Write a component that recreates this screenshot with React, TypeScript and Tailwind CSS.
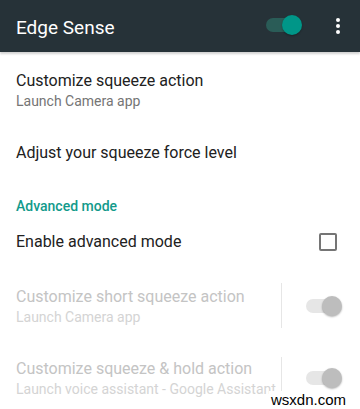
import React from 'react';

function Toggle({ on, disabled }: { on: boolean; disabled?: boolean }) {
  // Material-style switch: track behind a round knob
  const track = disabled ? 'bg-[#e6e6e6]' : on ? 'bg-[#2a5c57]' : 'bg-[#9e9e9e]';
  const knob = disabled ? 'bg-[#bdbdbd]' : on ? 'bg-[#009688]' : 'bg-[#f1f1f1]';
  return (
    <div className="relative w-[34px] h-[20px] flex items-center">
      <div className={`w-[34px] h-[14px] rounded-full ${track}`} />
      <div
        className={`absolute top-0 ${on ? 'right-[-2px]' : 'left-[-2px]'} w-[20px] h-[20px] rounded-full ${knob} shadow-[0_1px_2px_rgba(0,0,0,0.3)]`}
      />
    </div>
  );
}

function Kebab() {
  return (
    <svg width="6" height="18" viewBox="0 0 6 18" fill="#ffffff">
      <circle cx="3" cy="3" r="2" />
      <circle cx="3" cy="9" r="2" />
      <circle cx="3" cy="15" r="2" />
    </svg>
  );
}

export default function App() {
  return (
    <div className="relative w-[360px] h-[409px] bg-white overflow-hidden font-['Roboto',_'Liberation_Sans',_sans-serif]">
      {/* Toolbar */}
      <div className="h-[52px] bg-[#263238] flex items-center pl-[16px] pr-[19px] shadow-[0_2px_2px_rgba(0,0,0,0.18)] relative z-10">
        <span className="text-white text-[19px] leading-none flex-1 pt-[3px]">Edge Sense</span>
        <div className="mr-[35px] mb-[2px]">
          <Toggle on />
        </div>
        <Kebab />
      </div>

      {/* Customize squeeze action */}
      <div className="h-[77px] flex flex-col justify-center px-[16px]">
        <span className="text-[16px] leading-[20px] text-[#212121]">Customize squeeze action</span>
        <span className="text-[14px] leading-[20px] text-[#757575]">Launch Camera app</span>
      </div>

      {/* Adjust force */}
      <div className="h-[48px] flex items-center px-[16px]">
        <span className="text-[16px] leading-[20px] text-[#212121]">Adjust your squeeze force level</span>
      </div>

      {/* Category */}
      <div className="pt-[19px] pb-[2px] px-[16px] text-[14px] leading-[20px] font-medium text-[#129a8b]">
        Advanced mode
      </div>

      {/* Enable advanced mode */}
      <div className="h-[51px] flex items-center pl-[16px] pr-[23px]">
        <span className="flex-1 text-[16px] leading-[20px] text-[#212121] mt-[-3px]">Enable advanced mode</span>
        <div className="w-[18px] h-[18px] border-2 border-[#757575] rounded-[2px] mt-[-4px]" />
      </div>

      {/* Disabled: short squeeze */}
      <div className="h-[76px] flex items-center pl-[16px] pr-[20px]">
        <div className="flex-1 flex flex-col">
          <span className="text-[16px] leading-[20px] text-[#c4c4c4]">Customize short squeeze action</span>
          <span className="text-[14px] leading-[20px] text-[#d4d4d4]">Launch Camera app</span>
        </div>
        <div className="w-px h-[45px] bg-[#e6e6e6] mr-[24px] mt-[-4px]" />
        <div className="mt-[-2px]">
          <Toggle on disabled />
        </div>
      </div>

      {/* Disabled: squeeze & hold */}
      <div className="h-[68px] flex items-center pl-[16px] pr-[20px]">
        <div className="flex-1 flex flex-col min-w-0">
          <span className="text-[16px] leading-[20px] text-[#c4c4c4] whitespace-nowrap">Customize squeeze &amp; hold action</span>
          <span className="text-[14px] leading-[20px] text-[#d4d4d4] whitespace-nowrap">Launch voice assistant - Google Assistant</span>
        </div>
        <div className="w-px h-[45px] bg-[#e6e6e6] mr-[24px] shrink-0" />
        <div className="shrink-0 mt-[-2px]">
          <Toggle on disabled />
        </div>
      </div>

      {/* watermark */}
      <span className="absolute right-[12px] bottom-[0px] text-[15px] leading-[18px] text-black bg-white px-[2px] font-['Liberation_Sans',_sans-serif]">
        wsxdn.com
      </span>
    </div>
  );
}
